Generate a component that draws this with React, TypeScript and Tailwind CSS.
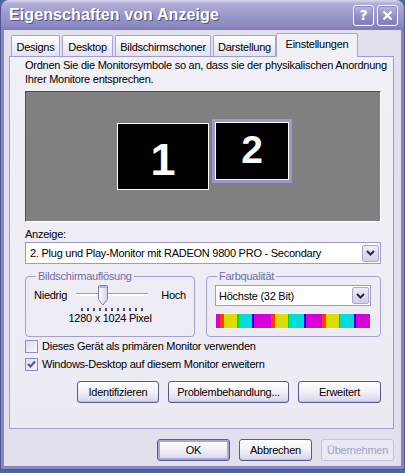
import React from 'react';

function TitleButton({ children }: { children: React.ReactNode }) {
  return (
    <div className="w-[21px] h-[21px] rounded-[3px] border border-white bg-[linear-gradient(to_bottom,#b9b8dc,#8d8cc3_60%,#7e7cb6)] flex items-center justify-center shadow-[inset_0_0_0_1px_#8a88bd]">
      {children}
    </div>
  );
}

function XpButton({ label, w, def, disabled }: { label: string; w: string; def?: boolean; disabled?: boolean }) {
  if (disabled) {
    return (
      <div className={`${w} h-[22px] rounded-[3px] border border-[#c3c2dc] bg-[#eae9f3] flex items-center justify-center text-[#a3a2c6]`}>
        {label}
      </div>
    );
  }
  return (
    <div
      className={`${w} h-[22px] rounded-[3px] border border-[#5b5994] bg-[linear-gradient(to_bottom,#ffffff,#f1f0f8_50%,#dcdbeb_90%,#c9c8df)] flex items-center justify-center ${
        def ? 'shadow-[inset_0_0_0_2px_#a8a6d6]' : 'shadow-[inset_0_-1px_0_#c2c1da]'
      }`}
    >
      {label}
    </div>
  );
}

function DropButton() {
  return (
    <div className="w-[17px] h-[17px] rounded-[2px] border border-[#a9a8d1] bg-[linear-gradient(to_bottom,#eeedf7,#cfcee6)] flex items-center justify-center">
      <svg width="9" height="6" viewBox="0 0 9 6">
        <path d="M1 1 L4.5 4.5 L8 1" fill="none" stroke="#2a2850" strokeWidth="2" />
      </svg>
    </div>
  );
}

function CheckBox({ checked }: { checked?: boolean }) {
  return (
    <div className="w-[13px] h-[13px] border border-[#8e8dc0] bg-[linear-gradient(135deg,#dcdbe8,#f6f6fa)] flex items-center justify-center">
      {checked && (
        <svg width="9" height="9" viewBox="0 0 9 9">
          <path d="M1 4 L3.5 6.5 L8 1.5" fill="none" stroke="#5452a0" strokeWidth="2" />
        </svg>
      )}
    </div>
  );
}

// color quality strip, widths in px
const strip: [string, number][] = [
  ['#d800d8', 4], ['#ff3c00', 4], ['#dcdc00', 13], ['#00dc00', 2], ['#00dcdc', 13], ['#0000ff', 2],
  ['#d800d8', 17], ['#ff3c00', 4], ['#dcdc00', 13], ['#00dc00', 1], ['#00dcdc', 15], ['#0000ff', 2],
  ['#d800d8', 16], ['#ff3c00', 4], ['#dcdc00', 13], ['#00dc00', 1], ['#00dcdc', 14], ['#0000ff', 2],
  ['#d800d8', 14],
];

export default function App() {
  let x = 0;
  return (
    <div className="w-[405px] h-[473px] bg-[#4a66a6] overflow-hidden font-['Tahoma','Liberation_Sans',sans-serif] text-[11px] leading-[14px] tracking-[-0.25px] text-black">
      <div className="h-[470px] flex flex-col rounded-t-[8px] bg-[#54528f] p-[1px] pt-0">
        {/* title bar */}
        <div className="h-[30px] shrink-0 rounded-t-[8px] bg-[linear-gradient(to_bottom,#d9d8ee_0%,#b0afd8_12%,#9b9acb_45%,#8e8dc2_80%,#7d7bb4_100%)] flex items-center pl-[8px] pr-[6px]">
          <span className="text-white font-bold text-[16px] tracking-[0.1px] font-['Liberation_Sans',sans-serif] [text-shadow:1px_1px_0_#55538c]">
            Eigenschaften von Anzeige
          </span>
          <div className="ml-auto flex gap-[3px]">
            <TitleButton>
              <span className="text-white font-bold text-[14px] font-['DejaVu_Sans',sans-serif] leading-none">?</span>
            </TitleButton>
            <TitleButton>
              <svg width="11" height="11" viewBox="0 0 11 11">
                <path d="M1.5 1.5 L9.5 9.5 M9.5 1.5 L1.5 9.5" stroke="white" strokeWidth="2.2" />
              </svg>
            </TitleButton>
          </div>
        </div>

        {/* body */}
        <div className="flex-1 border-x-[3px] border-b-[3px] border-[#8886be] bg-[#e1e0ec] flex flex-col">
          {/* tabs */}
          <div className="flex items-end h-[26px] pl-[7px] gap-[2px]">
            {[
              ['Designs', 'w-[49px]'],
              ['Desktop', 'w-[51px]'],
              ['Bildschirmschoner', 'w-[96px]'],
              ['Darstellung', 'w-[63px]'],
            ].map(([t, w]) => (
              <div
                key={t}
                className={`${w} h-[21px] rounded-t-[2px] border border-b-0 border-[#a6a5cf] bg-[linear-gradient(to_bottom,#ffffff,#eeedf6_60%,#e2e1ee)] flex items-center justify-center pt-[1px]`}
              >
                {t}
              </div>
            ))}
            <div className="w-[82px] h-[24px] -ml-[2px] mb-[-1px] relative z-10 rounded-t-[2px] border border-b-0 border-[#a6a5cf] bg-[#f1f0f7] flex items-start justify-center pt-[3px]">
              Einstellungen
            </div>
          </div>

          {/* panel */}
          <div className="h-[373px] ml-[5px] mr-[7px] border border-[#9f9ec9] bg-[linear-gradient(to_bottom,#f1f0f7,#eceaf3)] pl-[15px] pr-[12px] pt-[1px] flex flex-col">
            <p className="whitespace-nowrap">
              Ordnen Sie die Monitorsymbole so an, dass sie der physikalischen Anordnung
              <br />
              Ihrer Monitore entsprechen.
            </p>

            {/* monitor canvas */}
            <div className="relative mt-[5px] h-[131px] shrink-0 bg-[#808080] border-t border-l border-[#4a4a6a] border-b border-r border-b-white border-r-white">
              <div className="absolute left-[91px] top-[31px] w-[92px] h-[67px] bg-black border border-white flex items-center justify-center pt-[5px]">
                <span className="text-white font-bold text-[45px] tracking-normal font-['Liberation_Sans',sans-serif] leading-none">1</span>
              </div>
              <div className="absolute left-[186px] top-[27px] w-[80px] h-[64px] bg-[#9a98cc] p-[3px]">
                <div className="w-full h-full bg-black border border-white flex items-center justify-center pb-[4px]">
                  <span className="text-white font-bold text-[39px] tracking-normal font-['Liberation_Sans',sans-serif] leading-none">2</span>
                </div>
              </div>
            </div>

            <div className="mt-[5px]">Anzeige:</div>
            <div className="mt-[1px] h-[22px] bg-white border border-[#9c9bc8] flex items-center pl-[4px] pr-[1px]">
              <span>2. Plug und Play-Monitor mit RADEON 9800 PRO - Secondary</span>
              <div className="ml-auto">
                <DropButton />
              </div>
            </div>

            {/* groups */}
            <div className="mt-[5px] flex gap-[11px]">
              <fieldset className="w-[172px] h-[68px] border border-[#a3a2cc] rounded-[4px] px-[8px]">
                <legend className="ml-[2px] px-[2px] text-[#6f6dab]">Bildschirmauflösung</legend>
                <div className="flex items-start mt-[2px]">
                  <span className="mt-[3px]">Niedrig</span>
                  <div className="relative ml-[9px] w-[72px] h-[27px]">
                    <div className="absolute left-[0px] right-0 top-[8px] h-[3px] border-t border-[#9d9cc4] bg-white border-b border-b-[#ffffff]" />
                    <svg className="absolute left-[21px] top-0" width="12" height="21" viewBox="0 0 12 21">
                      <defs>
                        <linearGradient id="th" x1="0" y1="0" x2="1" y2="0">
                          <stop offset="0" stopColor="#ffffff" />
                          <stop offset="1" stopColor="#d2d1e6" />
                        </linearGradient>
                      </defs>
                      <path d="M1.5 1.5 Q1.5 0.5 2.5 0.5 L9.5 0.5 Q10.5 0.5 10.5 1.5 L10.5 14.5 L6 20 L1.5 14.5 Z" fill="url(#th)" stroke="#7e7cb6" />
                      <path d="M2 2 L10 2" stroke="#b7b5dc" strokeWidth="2" />
                    </svg>
                    <div className="absolute left-[5px] top-[23px] flex gap-[4px]">
                      {Array.from({ length: 11 }).map((_, i) => (
                        <div key={i} className="w-[2px] h-[3px] bg-[#505070]" />
                      ))}
                    </div>
                  </div>
                  <span className="ml-auto mt-[3px]">Hoch</span>
                </div>
                <div className="text-center -mt-[1px]">1280 x 1024 Pixel</div>
              </fieldset>

              <fieldset className="flex-1 h-[68px] border border-[#a3a2cc] rounded-[4px] pl-[8px] pr-[9px]">
                <legend className="ml-[2px] px-[2px] text-[#6f6dab]">Farbqualität</legend>
                <div className="mt-[2px] h-[21px] bg-white border border-[#9c9bc8] flex items-center pl-[3px] pr-[1px]">
                  <span>Höchste (32 Bit)</span>
                  <div className="ml-auto">
                    <DropButton />
                  </div>
                </div>
                <svg className="mt-[7px] block border border-white" width="156" height="16" viewBox="0 0 154 14" preserveAspectRatio="none">
                  {strip.map(([c, w], i) => {
                    const r = <rect key={i} x={x} y={0} width={w} height={14} fill={c} />;
                    x += w;
                    return r;
                  })}
                </svg>
              </fieldset>
            </div>

            <div className="mt-[2px] flex items-center gap-[4px] h-[14px]">
              <CheckBox />
              <span>Dieses Gerät als primären Monitor verwenden</span>
            </div>
            <div className="mt-[4px] flex items-center gap-[4px] h-[14px]">
              <CheckBox checked />
              <span>Windows-Desktop auf diesem Monitor erweitern</span>
            </div>

            <div className="mt-[10px] flex justify-end gap-[9px]">
              <XpButton label="Identifizieren" w="w-[82px]" />
              <XpButton label="Problembehandlung..." w="w-[121px]" />
              <XpButton label="Erweitert" w="w-[83px]" />
            </div>
          </div>

          {/* dialog buttons */}
          <div className="mt-[10px] mr-[7px] flex justify-end gap-[9px]">
            <XpButton label="OK" w="w-[73px]" def />
            <XpButton label="Abbrechen" w="w-[73px]" />
            <XpButton label="Übernehmen" w="w-[73px]" disabled />
          </div>
        </div>
      </div>
    </div>
  );
}
